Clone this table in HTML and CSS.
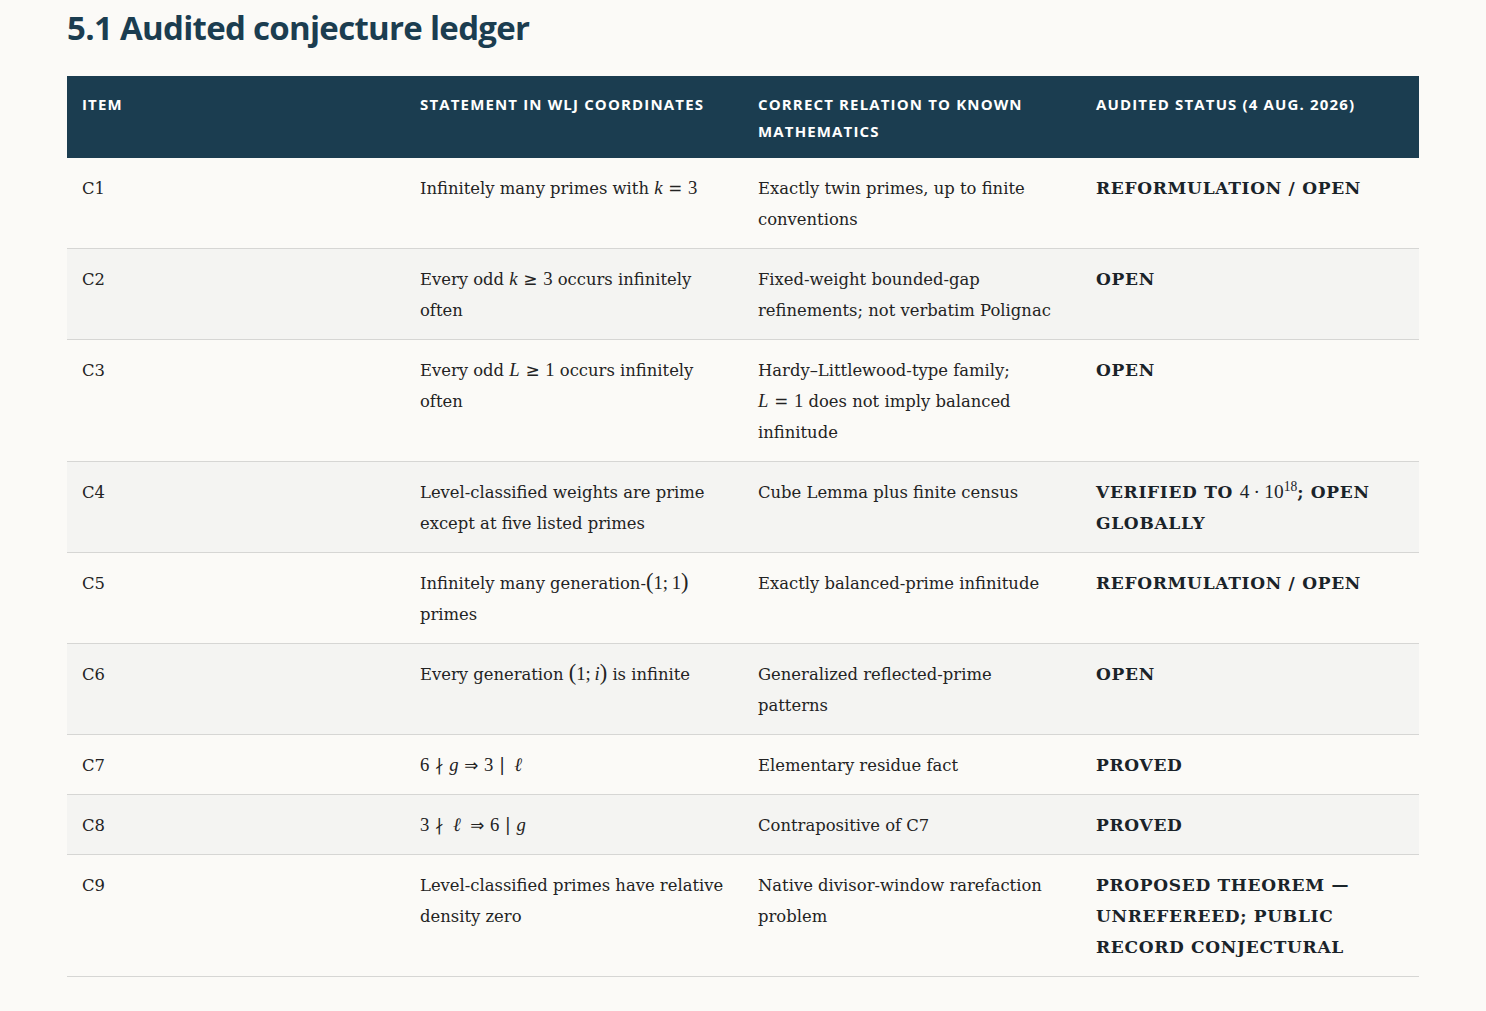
FILE: index.html
```html
<!DOCTYPE html>
<html lang="en">
<head>
<meta charset="utf-8">
<title>5.1 Audited conjecture ledger</title>
<link rel="stylesheet" href="styles.css">
</head>
<body>
<main class="page">
  <h2 class="section-title">5.1 Audited conjecture ledger</h2>
  <table class="ledger">
    <thead>
      <tr>
        <th>Item</th>
        <th>Statement in WLJ coordinates</th>
        <th>Correct relation to known mathematics</th>
        <th>Audited status (4 Aug. 2026)</th>
      </tr>
    </thead>
    <tbody>
      <tr>
        <td class="item">C1</td>
        <td>Infinitely many primes with <span class="m"><i>k</i><span class="rel">=</span>3</span></td>
        <td>Exactly twin primes, up to finite conventions</td>
        <td class="status">REFORMULATION / OPEN</td>
      </tr>
      <tr>
        <td class="item">C2</td>
        <td>Every odd <span class="m"><i>k</i><span class="rel">≥</span>3</span> occurs infinitely often</td>
        <td>Fixed-weight bounded-gap refinements; not verbatim Polignac</td>
        <td class="status">OPEN</td>
      </tr>
      <tr>
        <td class="item">C3</td>
        <td>Every odd <span class="m"><i>L</i><span class="rel">≥</span>1</span> occurs infinitely often</td>
        <td>Hardy–Littlewood-type family;<br><span class="m"><i>L</i><span class="rel">=</span>1</span> does not imply balanced infinitude</td>
        <td class="status">OPEN</td>
      </tr>
      <tr>
        <td class="item">C4</td>
        <td>Level-classified weights are prime except at five listed primes</td>
        <td>Cube Lemma plus finite census</td>
        <td class="status">VERIFIED TO <span class="m num">4<span class="bin">·</span>10<sup>18</sup></span>; OPEN GLOBALLY</td>
      </tr>
      <tr>
        <td class="item">C5</td>
        <td>Infinitely many generation-<span class="m"><span class="paren">(</span>1;<span class="sp"></span>1<span class="paren">)</span></span> primes</td>
        <td>Exactly balanced-prime infinitude</td>
        <td class="status">REFORMULATION / OPEN</td>
      </tr>
      <tr>
        <td class="item">C6</td>
        <td>Every generation <span class="m"><span class="paren">(</span>1;<span class="sp"></span><i>i</i><span class="paren">)</span></span> is infinite</td>
        <td>Generalized reflected-prime patterns</td>
        <td class="status">OPEN</td>
      </tr>
      <tr>
        <td class="item">C7</td>
        <td><span class="m">6<span class="rel">∤</span><i>g</i><span class="rel">⇒</span>3<span class="rel">|</span><span class="sp"></span><i>ℓ</i></span></td>
        <td>Elementary residue fact</td>
        <td class="status">PROVED</td>
      </tr>
      <tr>
        <td class="item">C8</td>
        <td><span class="m">3<span class="rel">∤</span><span class="sp"></span><i>ℓ</i><span class="sp"></span><span class="rel">⇒</span>6<span class="rel">|</span><i>g</i></span></td>
        <td>Contrapositive of C7</td>
        <td class="status">PROVED</td>
      </tr>
      <tr>
        <td class="item">C9</td>
        <td>Level-classified primes have relative density zero</td>
        <td>Native divisor-window rarefaction problem</td>
        <td class="status">PROPOSED THEOREM — UNREFEREED; PUBLIC RECORD CONJECTURAL</td>
      </tr>
    </tbody>
  </table>
</main>
</body>
</html>
```

FILE: styles.css
```css
html, body {
  margin: 0;
  padding: 0;
  background: #fbfaf7;
}

.page {
  padding: 0 67px 34px 67px;
}

.section-title {
  margin: 0 0 20px 0;
  font-family: "Open Sans", "Noto Sans", sans-serif;
  font-weight: 700;
  font-size: 33px;
  line-height: 56px;
  color: #1b3d50;
  letter-spacing: -0.7px;
}

.ledger {
  width: 100%;
  border-collapse: collapse;
  table-layout: fixed;
  font-family: "DejaVu Serif", "Liberation Serif", serif;
  font-size: 16.4px;
  color: #232323;
}

.ledger th {
  background: #1b3d50;
  color: #ffffff;
  text-align: left;
  vertical-align: top;
  font-family: "Open Sans", "Noto Sans", sans-serif;
  font-weight: 700;
  font-size: 15px;
  letter-spacing: 1.15px;
  text-transform: uppercase;
  line-height: 27px;
  padding: 15px 15px 13px 15px;
}

.ledger td {
  vertical-align: top;
  text-align: left;
  padding: 15px 15px 13px 15px;
  line-height: 31px;
  border-bottom: 1px solid #d6d6d4;
}

.ledger tbody tr:nth-child(even) td {
  background: #f4f4f2;
}

.ledger .status {
  font-size: 17px;
  font-weight: 700;
  letter-spacing: 0.7px;
  color: #1a2329;
}

.m {
  font-family: "Liberation Serif", "DejaVu Serif", serif;
  font-size: 1.14em;
  font-weight: 400;
  line-height: 0;
  letter-spacing: 0;
  white-space: nowrap;
}

.m i {
  font-style: italic;
}

.rel {
  font-family: "DejaVu Sans", sans-serif;
  font-size: 0.9em;
  margin: 0 0.34em;
}

.bin {
  margin: 0 0.22em;
}

.sp {
  display: inline-block;
  width: 0.2em;
}

.paren {
  font-size: 1.2em;
  line-height: 0;
}

.num sup {
  font-size: 0.7em;
  line-height: 0;
}
```
